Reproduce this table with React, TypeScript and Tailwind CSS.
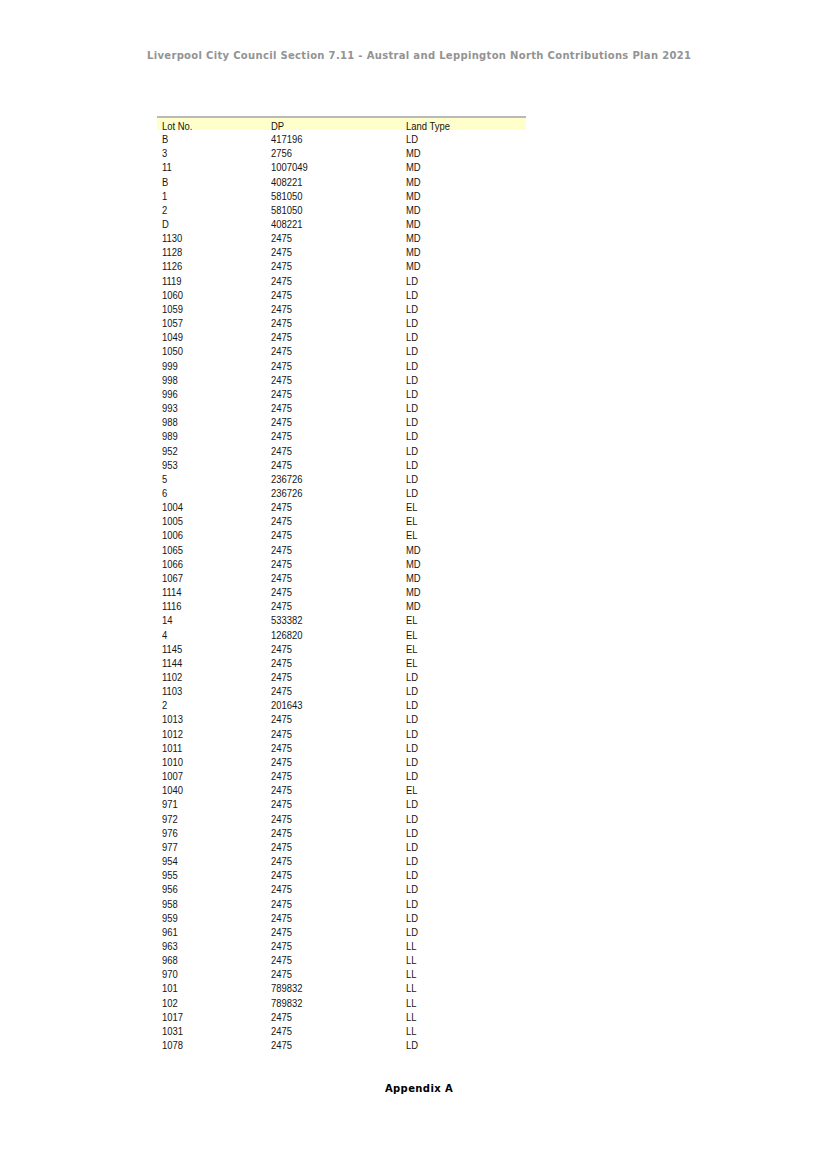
const rows: [string, string, string][] = [
  ["B", "417196", "LD"],
  ["3", "2756", "MD"],
  ["11", "1007049", "MD"],
  ["B", "408221", "MD"],
  ["1", "581050", "MD"],
  ["2", "581050", "MD"],
  ["D", "408221", "MD"],
  ["1130", "2475", "MD"],
  ["1128", "2475", "MD"],
  ["1126", "2475", "MD"],
  ["1119", "2475", "LD"],
  ["1060", "2475", "LD"],
  ["1059", "2475", "LD"],
  ["1057", "2475", "LD"],
  ["1049", "2475", "LD"],
  ["1050", "2475", "LD"],
  ["999", "2475", "LD"],
  ["998", "2475", "LD"],
  ["996", "2475", "LD"],
  ["993", "2475", "LD"],
  ["988", "2475", "LD"],
  ["989", "2475", "LD"],
  ["952", "2475", "LD"],
  ["953", "2475", "LD"],
  ["5", "236726", "LD"],
  ["6", "236726", "LD"],
  ["1004", "2475", "EL"],
  ["1005", "2475", "EL"],
  ["1006", "2475", "EL"],
  ["1065", "2475", "MD"],
  ["1066", "2475", "MD"],
  ["1067", "2475", "MD"],
  ["1114", "2475", "MD"],
  ["1116", "2475", "MD"],
  ["14", "533382", "EL"],
  ["4", "126820", "EL"],
  ["1145", "2475", "EL"],
  ["1144", "2475", "EL"],
  ["1102", "2475", "LD"],
  ["1103", "2475", "LD"],
  ["2", "201643", "LD"],
  ["1013", "2475", "LD"],
  ["1012", "2475", "LD"],
  ["1011", "2475", "LD"],
  ["1010", "2475", "LD"],
  ["1007", "2475", "LD"],
  ["1040", "2475", "EL"],
  ["971", "2475", "LD"],
  ["972", "2475", "LD"],
  ["976", "2475", "LD"],
  ["977", "2475", "LD"],
  ["954", "2475", "LD"],
  ["955", "2475", "LD"],
  ["956", "2475", "LD"],
  ["958", "2475", "LD"],
  ["959", "2475", "LD"],
  ["961", "2475", "LD"],
  ["963", "2475", "LL"],
  ["968", "2475", "LL"],
  ["970", "2475", "LL"],
  ["101", "789832", "LL"],
  ["102", "789832", "LL"],
  ["1017", "2475", "LL"],
  ["1031", "2475", "LL"],
  ["1078", "2475", "LD"],
];

// Arial Narrow look: Liberation Sans squeezed horizontally
const txt =
  "inline-block origin-left scale-x-[0.82] whitespace-nowrap font-['Liberation_Sans',Arial,sans-serif] text-[11.5px] leading-[14px] text-[#151515]";

function Cells({ a, b, c }: { a: string; b: string; c: string }) {
  return (
    <>
      <div className="w-[114px] pl-[5px]">
        <span className={txt}>{a}</span>
      </div>
      <div className="w-[135px]">
        <span className={txt}>{b}</span>
      </div>
      <div className="flex-1">
        <span className={txt}>{c}</span>
      </div>
    </>
  );
}

export default function App() {
  return (
    <div className="w-[816px] h-[1155px] bg-white flex flex-col">
      {/* running header */}
      <div className="pt-[48px] pl-[147px] h-[116px]">
        <p className="font-['DejaVu_Sans',sans-serif] font-bold text-[10px] leading-[16px] text-[#939393] tracking-[0.32px] whitespace-nowrap">
          Liverpool City Council Section 7.11 - Austral and Leppington North Contributions Plan 2021
        </p>
      </div>

      {/* lot table */}
      <div className="ml-[157px] w-[369px]">
        <div className="flex h-[14px] items-center bg-[#ffffcc] border-t-2 border-[#b9b9b9]">
          <Cells a="Lot No." b="DP" c="Land Type" />
        </div>
        {rows.map(([lot, dp, type], i) => (
          <div key={i} className="flex h-[14.17px] items-center">
            <Cells a={lot} b={dp} c={type} />
          </div>
        ))}
      </div>

      <div className="flex justify-center pl-[22px] pt-[31px]">
        <p className="font-['DejaVu_Sans',sans-serif] font-bold text-[10px] tracking-[0.4px] text-black">Appendix A</p>
      </div>
    </div>
  );
}
